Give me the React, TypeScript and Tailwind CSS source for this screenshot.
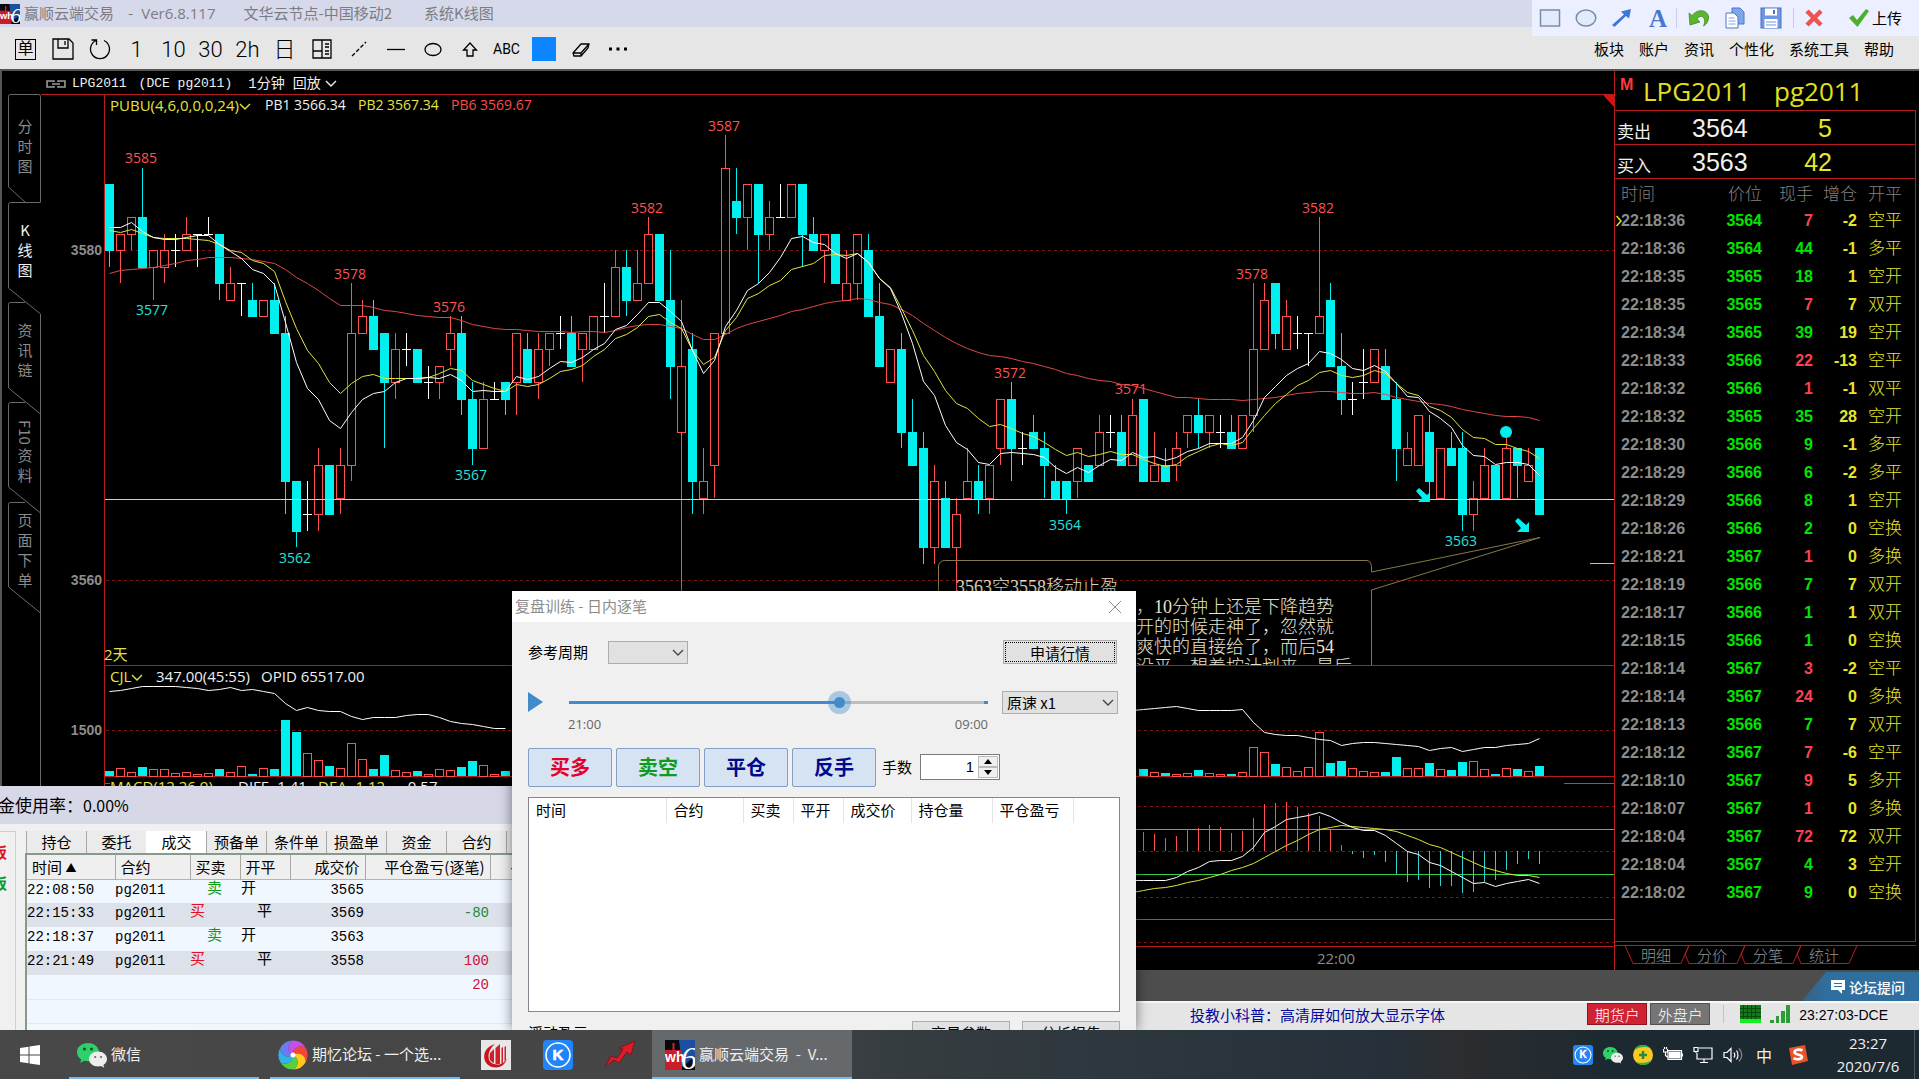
import React, { FC, ReactNode } from 'react';

type Kind = 'c' | 'r' | 'w';
// kind, body top, body bottom, high, low (price above 3500)
type Candle = [Kind, number, number, number, number];

const candles: Candle[] = [
  ['c', 84, 80, 84, 79], ['r', 81, 80, 81, 78], ['r', 82, 81, 82, 80], ['c', 82, 79, 85, 79],
  ['r', 80, 79, 80, 77], ['r', 80, 79, 81, 78], ['w', 80, 80, 81, 79], ['r', 81, 80, 82, 80],
  ['w', 81, 81, 81, 79], ['w', 81, 81, 82, 81], ['c', 81, 78, 81, 77], ['r', 78, 77, 79, 77],
  ['w', 78, 78, 78, 76], ['c', 77, 76, 78, 76], ['r', 77, 76, 77, 76], ['c', 77, 75, 78, 75],
  ['c', 75, 66, 76, 64], ['c', 66, 63, 66, 62], ['w', 64, 64, 66, 63], ['r', 67, 64, 68, 63],
  ['c', 67, 64, 67, 64], ['r', 67, 65, 68, 64], ['r', 75, 67, 78, 66], ['r', 76, 75, 77, 75],
  ['c', 76, 74, 77, 74], ['c', 75, 72, 75, 68], ['r', 74, 72, 75, 71], ['w', 74, 74, 75, 73],
  ['c', 74, 72, 74, 72], ['w', 72, 72, 73, 71], ['r', 73, 72, 73, 71], ['r', 75, 74, 76, 73],
  ['c', 75, 71, 76, 70], ['c', 71, 68, 72, 67], ['r', 71, 68, 72, 68], ['w', 71, 71, 72, 71],
  ['c', 72, 71, 72, 70], ['r', 75, 72, 75, 70], ['c', 74, 72, 75, 72], ['r', 74, 72, 75, 71],
  ['r', 75, 74, 75, 73], ['w', 75, 75, 76, 74], ['c', 75, 73, 76, 73], ['r', 75, 74, 75, 72],
  ['r', 76, 74, 76, 74], ['w', 76, 76, 78, 75], ['r', 79, 76, 80, 76], ['c', 79, 77, 80, 76],
  ['r', 78, 77, 80, 77], ['r', 81, 78, 82, 78], ['c', 81, 77, 81, 77], ['c', 77, 73, 80, 71],
  ['r', 73, 69, 77, 59], ['c', 74, 66, 75, 64], ['r', 66, 65, 68, 64], ['r', 75, 67, 75, 65],
  ['r', 85, 75, 87, 75], ['c', 83, 82, 85, 81], ['r', 84, 82, 84, 80], ['c', 84, 81, 84, 78],
  ['r', 82, 81, 83, 80], ['w', 82, 82, 84, 82], ['r', 84, 82, 84, 82], ['c', 84, 81, 84, 79],
  ['c', 81, 80, 82, 80], ['r', 81, 80, 81, 78], ['c', 81, 78, 81, 78], ['r', 78, 77, 80, 77],
  ['r', 81, 78, 81, 77], ['c', 80, 76, 81, 76], ['c', 76, 73, 78, 73], ['r', 74, 72, 74, 72],
  ['c', 74, 69, 75, 68], ['c', 69, 67, 71, 67], ['c', 68, 62, 69, 61], ['r', 66, 62, 67, 61],
  ['c', 65, 62, 66, 62], ['r', 64, 62, 65, 59], ['r', 66, 65, 68, 65], ['c', 66, 65, 67, 64],
  ['r', 67, 65, 67, 64], ['r', 71, 68, 71, 67], ['c', 71, 68, 72, 66], ['w', 68, 68, 69, 67],
  ['c', 69, 68, 70, 68], ['c', 68, 67, 69, 65], ['c', 66, 65, 67, 65], ['c', 66, 65, 66, 64],
  ['r', 68, 66, 68, 65], ['c', 67, 66, 67, 66], ['r', 69, 67, 70, 67], ['w', 69, 69, 70, 68],
  ['c', 69, 67, 70, 67], ['r', 70, 67, 71, 67], ['c', 71, 66, 71, 66], ['r', 67, 66, 69, 66],
  ['c', 67, 66, 68, 66], ['r', 68, 67, 69, 66], ['r', 70, 69, 70, 68], ['c', 70, 69, 71, 68],
  ['r', 70, 69, 70, 68], ['w', 69, 69, 70, 68], ['c', 69, 68, 70, 68], ['r', 70, 68, 70, 68],
  ['r', 74, 70, 78, 69], ['r', 77, 74, 78, 74], ['c', 78, 75, 78, 74], ['r', 76, 74, 77, 74],
  ['w', 75, 75, 76, 74], ['w', 75, 75, 75, 73], ['r', 76, 75, 82, 75], ['c', 77, 73, 78, 73],
  ['c', 73, 71, 75, 70], ['w', 71, 71, 72, 70], ['w', 72, 72, 74, 71], ['r', 74, 72, 74, 72],
  ['c', 73, 71, 74, 71], ['c', 71, 68, 72, 66], ['r', 68, 67, 69, 67], ['r', 70, 67, 70, 67],
  ['c', 69, 66, 70, 65], ['r', 68, 65, 68, 65], ['c', 68, 67, 69, 67], ['c', 68, 64, 69, 63],
  ['r', 65, 64, 66, 63], ['r', 67, 65, 68, 65], ['c', 67, 65, 67, 65], ['r', 68, 65, 69, 65],
  ['c', 68, 67, 68, 65], ['r', 67, 66, 68, 66], ['c', 68, 64, 68, 64],
];

const pb1 = [
  227, 227, 222, 231, 237, 239, 239, 237, 235, 235, 244, 251, 258, 269, 273, 284, 322, 362, 388, 399, 420, 428, 412,
  399, 393, 391, 382, 378, 378, 377, 378, 374, 380, 391, 390, 391, 391, 376, 379, 376, 368, 361, 362, 357, 349, 343,
  329, 325, 314, 302, 302, 311, 321, 350, 373, 360, 326, 310, 290, 283, 272, 257, 238, 236, 242, 244, 253, 258, 253,
  262, 278, 288, 313, 343, 381, 395, 425, 442, 449, 462, 464, 453, 452, 453, 454, 457, 467, 473, 467, 472, 465, 459,
  460, 452, 457, 456, 460, 457, 451, 448, 443, 443, 443, 437, 420, 397, 386, 375, 368, 363, 351, 353, 359, 368, 370,
  365, 371, 383, 396, 397, 411, 418, 427, 445, 455, 456, 464, 462, 462, 464, 475,
];
const pb2 = [
  230, 232, 229, 233, 237, 238, 238, 238, 239, 240, 244, 250, 252, 260, 263, 271, 301, 328, 350, 363, 382, 393, 383,
  376, 374, 378, 378, 378, 378, 377, 373, 368, 370, 380, 384, 388, 391, 384, 386, 384, 378, 371, 369, 365, 356, 349,
  338, 334, 327, 316, 314, 322, 328, 350, 364, 357, 330, 317, 298, 293, 285, 280, 269, 266, 263, 255, 254, 255, 253,
  262, 278, 287, 308, 330, 355, 371, 390, 403, 408, 418, 426, 424, 428, 433, 436, 442, 449, 455, 452, 456, 454, 451,
  454, 454, 459, 463, 466, 464, 456, 451, 446, 443, 445, 442, 428, 415, 403, 394, 385, 380, 372, 370, 375, 377, 375,
  370, 373, 383, 392, 395, 406, 410, 417, 429, 437, 438, 444, 444, 448, 451, 458,
];
const pb6 = [
  273, 270, 269, 268, 267, 265, 263, 260, 259, 257, 257, 257, 258, 259, 261, 263, 269, 277, 283, 290, 298, 305, 305,
  305, 307, 310, 311, 313, 315, 316, 317, 317, 320, 324, 326, 328, 329, 329, 330, 331, 331, 331, 332, 331, 331, 332,
  330, 327, 325, 324, 324, 326, 328, 334, 339, 339, 334, 328, 324, 321, 318, 315, 311, 309, 306, 303, 301, 300, 298,
  299, 302, 304, 309, 315, 323, 330, 337, 343, 348, 352, 355, 356, 358, 361, 363, 366, 369, 373, 375, 378, 380, 381,
  384, 385, 388, 391, 394, 397, 397, 398, 399, 399, 399, 400, 399, 398, 397, 395, 393, 392, 391, 391, 392, 393, 393,
  392, 394, 397, 399, 401, 403, 404, 406, 409, 411, 413, 415, 416, 416, 417, 420,
];

const volumeEarly = [
  5, 8, 4, 9, 7, 7, 3, 4, 2, 3, 7, 4, 10, 2, 8, 7, 56, 44, 23, 16, 10, 8, 33, 17, 7, 21, 6, 4, 5, 2, 7, 6, 9, 15, 11,
  2, 5,
];
const volumeLate = [
  7, 4, 3, 2, 3, 6, 3, 2, 2, 4, 29, 24, 12, 9, 5, 9, 44, 13, 15, 8, 5, 4, 4, 19, 8, 8, 13, 7, 6, 14, 15, 7, 2, 8, 7,
  5, 10,
];
const opidEarly = [
  691, 690, 688, 686, 686, 686, 686, 687, 688, 690, 689, 687, 690, 689, 691, 693, 703, 710, 707, 710, 711, 711, 716,
  719, 717, 717, 717, 715, 714, 714, 717, 721, 723, 724, 726, 728, 728,
];
const opidLate = [
  710, 709, 708, 707, 706, 708, 710, 710, 710, 710, 709, 722, 732, 734, 735, 735, 737, 739, 740, 745, 743, 742, 742,
  743, 744, 745, 746, 750, 748, 747, 751, 749, 747, 747, 745, 744, 743, 738,
];
const diff = [
  880, 880, 880, 880, 877, 871, 867, 861, 860, 860, 856, 847, 832, 826, 819, 817, 815, 812, 816, 822, 827, 830, 830,
  835, 843, 851, 854, 862, 865, 871, 877, 883, 882, 886, 883, 881, 879, 883,
];
const dea = [
  892, 890, 888, 887, 885, 882, 880, 877, 874, 870, 867, 863, 857, 851, 845, 840, 834, 829, 827, 825, 826, 827, 828,
  829, 831, 835, 839, 844, 847, 852, 857, 862, 867, 870, 873, 875, 875, 877,
];
const macd = [
  19, 17, 13, 15, 22, 23, 26, 24, 18, 20, 33, 47, 48, 49, 44, 38, 35, 21, 6, -3, -7, -4, -11, -23, -31, -29, -37, -35,
  -35, -42, -41, -31, -29, -19, -13, -8, -13,
];

const LATE = 94;
const RED = '#ff5050';
const CYAN = '#00f0f0';
const LINE = '#b91c1c';

const px = (i: number) => 109 + i * 11;
const py = (price: number) => Math.round(250 + (80 - price) * 16.5);
const toPoints = (ys: number[], from = 0) => ys.map((y, i) => `${px(from + i) + 0.5},${y + 0.5}`).join(' ');

const CandleShape: FC<{ index: number; candle: Candle }> = ({ index, candle }) => {
  const [kind, top, bottom, high, low] = candle;
  const x = px(index);
  const color = kind === 'c' ? CYAN : kind === 'r' ? RED : '#ffffff';
  const t = py(top);
  const b = py(bottom);
  return (
    <g shapeRendering="crispEdges">
      {high > top && <rect x={x} y={py(high)} width={1} height={t - py(high)} fill={color} />}
      {low < bottom && <rect x={x} y={b} width={1} height={py(low) - b} fill={color} />}
      {kind === 'c' && <rect x={x - 4} y={t} width={9} height={b - t + 1} fill={color} />}
      {kind === 'r' && <rect x={x - 3.5} y={t + 0.5} width={8} height={b - t} fill="none" stroke={color} />}
      {kind === 'w' && <rect x={x - 4} y={t} width={9} height={1} fill={color} />}
    </g>
  );
};

const VolumeBar: FC<{ index: number; height: number }> = ({ index, height }) => {
  const x = px(index);
  return candles[index][0] === 'c' ? (
    <rect x={x - 4} y={776 - height} width={9} height={height} fill={CYAN} shapeRendering="crispEdges" />
  ) : (
    <rect x={x - 3.5} y={776.5 - height} width={8} height={height} fill="none" stroke={RED} shapeRendering="crispEdges" />
  );
};

const priceTags: [number, number, string, string][] = [
  [141, 163, '3585', RED],
  [152, 315, '3577', '#22e0dc'],
  [350, 279, '3578', RED],
  [449, 312, '3576', RED],
  [295, 563, '3562', '#22e0dc'],
  [471, 480, '3567', '#22e0dc'],
  [647, 213, '3582', RED],
  [724, 131, '3587', RED],
  [1010, 378, '3572', RED],
  [1131, 394, '3571', RED],
  [1065, 530, '3564', '#22e0dc'],
  [1252, 279, '3578', RED],
  [1318, 213, '3582', RED],
  [1461, 546, '3563', '#22e0dc'],
];

const noteLines = ['，10分钟上还是下降趋势', '开的时候走神了，忽然就', '爽快的直接给了，而后54', '没平，想着按计划来，最后'];

const Chart: FC = () => (
  <svg
    className="block h-full w-full font-['Open_Sans','Noto_Sans_CJK_SC',sans-serif]"
    viewBox="41 94 1573 876"
    preserveAspectRatio="xMinYMin meet"
    role="img"
    aria-label="LPG2011 K线图"
  >
    <defs>
      <clipPath id="main-pane">
        <rect x="105" y="94" width="1509" height="571" />
      </clipPath>
    </defs>
    {/* grid */}
    <g stroke="#7a1414" strokeDasharray="3 3" shapeRendering="crispEdges">
      {[250, 580, 730, 806, 851, 897, 942].map((y) => (
        <line key={y} x1={106} x2={1614} y1={y + 0.5} y2={y + 0.5} />
      ))}
    </g>
    <g stroke={LINE} shapeRendering="crispEdges">
      <line x1={41} x2={1614} y1={94.5} y2={94.5} />
      <line x1={104} x2={1614} y1={665.5} y2={665.5} />
      <line x1={104} x2={1614} y1={776.5} y2={776.5} />
      <line x1={104} x2={1614} y1={946.5} y2={946.5} />
      <line x1={104.5} x2={104.5} y1={94} y2={946} />
    </g>
    <path d="M1603 95h11v12z" fill="#d01414" />

    {candles.map((c, i) => (
      <CandleShape key={i} index={i} candle={c} />
    ))}
    <g fill="none" strokeWidth={1}>
      <polyline points={toPoints(pb6)} stroke="#e04848" />
      <polyline points={toPoints(pb2)} stroke="#e4e43c" />
      <polyline points={toPoints(pb1)} stroke="#ffffff" />
    </g>
    <rect x={105} y={499} width={1509} height={1} fill="#e0e040" />
    <rect x={1590} y={563} width={24} height={1} fill="#c8d830" />

    <g fill={CYAN}>
      <circle cx={1506} cy={432} r={6} />
      <path d="M1416 491l3-3 8 7 3-3v10h-12l4-4z" />
      <path d="M1515 521l3-3 8 7 3-3v10h-12l4-4z" />
    </g>

    <g clipPath="url(#main-pane)">
      <path
        d="M938.500 666V566a6 6 0 0 1 6-5.500H1366a5 6 0 0 1 5.500 6V572L1540 537.500L1371.500 590V666"
        fill="none"
        stroke="#85794a"
      />
      <g fill="#e8e4d0" fontSize={18} className="font-['Liberation_Serif','Noto_Sans_CJK_SC',serif] font-light">
        <text x={956} y={593}>
          3563空3558移动止盈
        </text>
        {noteLines.map((line, i) => (
          <text key={line} x={1136} y={613 + i * 20}>
            {line}
          </text>
        ))}
      </g>
    </g>

    <g fontSize={14} textAnchor="middle">
      {priceTags.map(([x, y, label, color]) => (
        <text key={`${x}-${y}`} x={x} y={y} fill={color}>
          {label}
        </text>
      ))}
    </g>
    <g fontSize={14} fill="#8c8c8c" textAnchor="end" className="font-['Liberation_Sans',sans-serif] font-bold">
      <text x={102} y={255}>3580</text>
      <text x={102} y={585}>3560</text>
      <text x={102} y={735}>1500</text>
    </g>
    <text x={104} y={660} fontSize={15} fill="#e4e43c">2天</text>
    <text x={1336} y={964} fontSize={15} fill="#8c8c8c" textAnchor="middle">22:00</text>

    {/* volume */}
    {volumeEarly.map((h, i) => (
      <VolumeBar key={i} index={i} height={h} />
    ))}
    {volumeLate.map((h, i) => (
      <VolumeBar key={i} index={LATE + i} height={h} />
    ))}
    <polyline points={toPoints(opidEarly)} fill="none" stroke="#ffffff" />
    <polyline points={toPoints(opidLate, LATE - 1)} fill="none" stroke="#ffffff" />

    {/* macd */}
    <g shapeRendering="crispEdges">
      <rect x={105} y={829} width={1509} height={1} fill="#30d048" />
      <rect x={105} y={874} width={1509} height={1} fill="#30d048" />
      <rect x={105} y={919} width={1509} height={1} fill="#2f6fd0" />
      <rect x={1564} y={783} width={50} height={1} fill="#2f6fd0" />
      <rect x={105} y={783} width={5} height={1} fill="#2f6fd0" />
      {macd.map((v, i) => (
        <rect
          key={i}
          x={px(LATE + i)}
          y={v > 0 ? 851 - v : 851}
          width={1}
          height={Math.abs(v)}
          fill={v > 0 ? RED : '#30d0d0'}
        />
      ))}
    </g>
    <polyline points={toPoints(dea, LATE - 1)} fill="none" stroke="#e4e43c" />
    <polyline points={toPoints(diff, LATE - 1)} fill="none" stroke="#ffffff" />
  </svg>
);

const Chevron: FC<{ className?: string }> = ({ className }) => (
  <svg viewBox="0 0 12 8" className={`h-2 w-3 ${className ?? ''}`} fill="none" stroke="currentColor" strokeWidth={1.4}>
    <path d="M1 1l5 5 5-5" />
  </svg>
);

const WhLogo: FC<{ className: string }> = ({ className }) => (
  <svg viewBox="0 0 30 30" className={className}>
    <rect width="30" height="30" fill="#08080e" />
    <path d="M14 0h16v16L17 27z" fill="#1c4fa0" />
    <path d="M0 10h17v20H0z" fill="#c81e2a" />
    <path d="M7.500 3h2v8h-2z" fill="#d21f2b" />
    <text x="0" y="22" fontSize="14" fill="#fff" className="font-['Liberation_Sans',sans-serif] font-bold">
      wh
    </text>
    <text x="16" y="29" fontSize="32" fill="#fff" className="font-['Liberation_Serif',serif] italic">
      6
    </text>
  </svg>
);

const WeChat: FC<{ className: string }> = ({ className }) => (
  <svg viewBox="0 0 30 26" className={className}>
    <path d="M11 1C4.800 1 0 5 0 10.200c0 3 1.600 5.500 4.200 7.200L3.200 21l4-2.200c1.200.3 2.500.5 3.800.5 6.100 0 11-4.100 11-9.100S17.100 1 11 1z" fill="#2fcf6b" />
    <circle cx="7.500" cy="7" r="1.500" fill="#12532b" />
    <circle cx="14.500" cy="7" r="1.500" fill="#12532b" />
    <path d="M21 9.500c-5 0-9 3.400-9 7.500s4 7.500 9 7.500c1 0 2-.2 3-.4l3.200 1.700-.8-2.800C28.600 21.600 30 19.500 30 17c0-4.100-4-7.500-9-7.500z" fill="#ededed" />
    <circle cx="18.200" cy="15" r="1.100" fill="#666" />
    <circle cx="24" cy="15" r="1.100" fill="#666" />
  </svg>
);

const KIcon: FC<{ className: string }> = ({ className }) => (
  <svg viewBox="0 0 30 30" className={className}>
    <rect width="30" height="30" rx="4" fill="#2184f7" />
    <circle cx="15" cy="15" r="12" fill="none" stroke="#fff" strokeWidth="1.600" />
    <text x="15" y="20" fontSize="15" textAnchor="middle" fill="#fff" stroke="#fff" strokeWidth=".6" className="font-['Liberation_Sans',sans-serif] font-bold">
      K
    </text>
  </svg>
);

const Svg: FC<{ children: ReactNode; className?: string }> = ({ children, className }) => (
  <svg
    viewBox="0 0 24 24"
    className={`h-6 w-6 ${className ?? ''}`}
    fill="none"
    stroke="currentColor"
    strokeWidth={1.3}
  >
    {children}
  </svg>
);

const tools: [string, ReactNode][] = [
  ['下单', <span className="flex h-[21px] w-[21px] items-center justify-center border border-black text-[16px] font-normal leading-none">单</span>],
  ['保存', <Svg><path d="M2 2h16l4 4v16H2zM7 2v9h10V2M14 4v4" /></Svg>],
  ['刷新', <Svg><path d="M16 3.500a9.500 9.500 0 1 1-8 0M3.500 3h5v5" /></Svg>],
  ['1分钟', '1'],
  ['10分钟', '10'],
  ['30分钟', '30'],
  ['2小时', '2h'],
  ['日线', '日'],
  ['布局', <Svg><path d="M3 3h18v18H3zM12 3v18M3 14h9M15 7h4M15 10h4M15 14h4M15 17h4" /></Svg>],
  ['斜线', <Svg><path d="M5 19L19 5" strokeDasharray="4 2" /></Svg>],
  ['横线', <Svg><path d="M3 12.500h18" /></Svg>],
  ['椭圆', <Svg><ellipse cx="12" cy="12.500" rx="8" ry="6" /></Svg>],
  ['箭头', <Svg><path d="M12 6l6.500 7H15v6H9v-6H5.500z" /></Svg>],
  ['文字', <span className="text-[14px] font-normal">ABC</span>],
  ['颜色', <span className="h-6 w-6 bg-[#0a84ff]" />],
  ['橡皮', <Svg><path d="M4 16L12 7h8l-1 4-7 8H5zM4 16h8l8-9M12 16v3" /></Svg>],
  ['更多', <svg viewBox="0 0 20 6" className="h-1.5 w-5"><path d="M1 1.500h3v3H1zM8.500 1.500h3v3h-3zM16 1.500h3v3h-3z" /></svg>],
];

const menus = ['板块', '账户', '资讯', '个性化', '系统工具', '帮助'];

const sideTabs: { glyphs: string[]; className: string }[] = [
  { glyphs: ['分', '时', '图'], className: 'h-[108px] pt-[22px] text-[#8a8a8a]' },
  { glyphs: ['K', '线', '图'], className: 'h-[100px] pt-[18px] text-[#f0f0f0]' },
  { glyphs: ['资', '讯', '链'], className: 'h-[100px] pt-[18px] text-[#8a8a8a]' },
  { glyphs: ['F10', '资', '料'], className: 'h-[100px] pt-[18px] text-[#8a8a8a]' },
  { glyphs: ['页', '面', '下', '单'], className: 'h-[112px] pt-2 text-[#8a8a8a]' },
];

const ticks: [string, number, number, boolean, number, string][] = [
  ['22:18:36', 3564, 7, true, -2, '空平'],
  ['22:18:36', 3564, 44, false, -1, '多平'],
  ['22:18:35', 3565, 18, false, 1, '空开'],
  ['22:18:35', 3565, 7, true, 7, '双开'],
  ['22:18:34', 3565, 39, false, 19, '空开'],
  ['22:18:33', 3566, 22, true, -13, '空平'],
  ['22:18:32', 3566, 1, true, -1, '双平'],
  ['22:18:32', 3565, 35, false, 28, '空开'],
  ['22:18:30', 3566, 9, false, -1, '多平'],
  ['22:18:29', 3566, 6, false, -2, '多平'],
  ['22:18:29', 3566, 8, false, 1, '空开'],
  ['22:18:26', 3566, 2, false, 0, '空换'],
  ['22:18:21', 3567, 1, true, 0, '多换'],
  ['22:18:19', 3566, 7, false, 7, '双开'],
  ['22:18:17', 3566, 1, false, 1, '双开'],
  ['22:18:15', 3566, 1, false, 0, '空换'],
  ['22:18:14', 3567, 3, true, -2, '空平'],
  ['22:18:14', 3567, 24, true, 0, '多换'],
  ['22:18:13', 3566, 7, false, 7, '双开'],
  ['22:18:12', 3567, 7, true, -6, '空平'],
  ['22:18:10', 3567, 9, true, 5, '多开'],
  ['22:18:07', 3567, 1, true, 0, '多换'],
  ['22:18:04', 3567, 72, true, 72, '双开'],
  ['22:18:04', 3567, 4, false, 3, '空开'],
  ['22:18:02', 3567, 9, false, 0, '空换'],
];

const TitleBar: FC = () => (
  <header className="flex h-[27px] shrink-0 items-center bg-[#d6d9e9] text-[15px] text-[#7c7c84]">
    <WhLogo className="h-5 w-5" />
    <span className="ml-1">赢顺云端交易</span>
    <span className="ml-3.5">-</span>
    <span className="ml-2 font-['Open_Sans',sans-serif]">Ver6.8.117</span>
    <span className="ml-7">文华云节点-中国移动2</span>
    <span className="ml-8">系统K线图</span>
  </header>
);

const Toolbar: FC = () => (
  <div className="flex h-[42px] shrink-0 items-center justify-between bg-[#e6e6e6] pl-[7px] pr-6 pt-0.5 text-black">
    <div className="flex">
      {tools.map(([label, icon]) => (
        <button
          key={label}
          aria-label={label}
          className="flex h-9 w-[37px] items-center justify-center font-['Roboto','Noto_Sans_CJK_SC',sans-serif] text-[22px] font-light"
        >
          {icon}
        </button>
      ))}
    </div>
    <nav className="flex gap-[15px] pr-px text-[15px]">
      {menus.map((m) => (
        <a key={m} href="#">
          {m}
        </a>
      ))}
    </nav>
  </div>
);

const ShotBar: FC = () => (
  <div className="absolute right-0 top-0 z-10 flex h-9 w-[387px] items-center bg-[#ebefff]">
    <button aria-label="矩形" className="flex w-9 justify-center">
      <svg viewBox="0 0 22 22" className="h-[22px] w-[22px]"><rect x="1.500" y="3" width="19" height="16" fill="#e1ebfa" stroke="#7b8bb0" strokeWidth="1.500" /></svg>
    </button>
    <button aria-label="圆形" className="flex w-9 justify-center">
      <svg viewBox="0 0 22 22" className="h-[22px] w-[22px]"><ellipse cx="11" cy="11" rx="9.800" ry="8" fill="#e1ebfa" stroke="#7b8bb0" strokeWidth="1.500" /></svg>
    </button>
    <button aria-label="画箭头" className="flex w-9 justify-center">
      <svg viewBox="0 0 22 22" className="h-[22px] w-[22px]"><path d="M1 18L13 7.500 10 4.500l10-2.500-2 9.500-3-2.500L3.500 20z" fill="#3f74d8" /></svg>
    </button>
    <button aria-label="添加文字" className="w-9 font-['Liberation_Serif',serif] text-[25px] font-bold leading-none text-[#4a76cc]">A</button>
    <i className="h-5 w-px bg-[#c8cfe4]" />
    <button aria-label="撤销" className="ml-1 flex w-9 justify-center">
      <svg viewBox="0 0 22 22" className="h-[22px] w-[22px]"><path d="M1 6l3 2.500C10 1 20 3 20.500 10c.2 4-2 7.500-5 9 2-4 1.500-9-2-9.500-2-.3-3.500.8-4.500 2.500l3 3L2 18z" fill="#5cb531" stroke="#3c8c1c" strokeWidth=".8" /></svg>
    </button>
    <button aria-label="复制" className="flex w-9 justify-center">
      <svg viewBox="0 0 22 22" className="h-[22px] w-[22px]"><path d="M8 1h8l4 4v12H8z" fill="#7ea6ea" stroke="#4d78c8" /><path d="M2 6h8l4 4v11H2z" fill="#fff" stroke="#4d78c8" /><path d="M4.500 11h6M4.500 14h7M4.500 17h7" stroke="#7ea6ea" /></svg>
    </button>
    <button aria-label="存盘" className="flex w-9 justify-center">
      <svg viewBox="0 0 22 22" className="h-[22px] w-[22px]"><rect x="1" y="1" width="20" height="20" fill="#6f97e4" stroke="#4a70bc" /><path d="M5 1.500h12v7H5zM4.500 12h13v9h-13z" fill="#fff" /><path d="M6 15h10M6 18h10" stroke="#6f97e4" /><path d="M13 3h2v4h-2z" fill="#4a70bc" /></svg>
    </button>
    <i className="ml-1 h-5 w-px bg-[#c8cfe4]" />
    <button aria-label="关闭" className="flex w-10 justify-center">
      <svg viewBox="0 0 22 22" className="h-[22px] w-[22px]"><path d="M4 4l14 14M18 4L4 18" stroke="#ef5350" strokeWidth="4.500" /></svg>
    </button>
    <button className="ml-3.5 flex items-center gap-0.5 text-[15px] text-black">
      <svg viewBox="0 0 22 22" className="h-[22px] w-[22px]"><path d="M1 11l4-3 4 5L18 2l3 2L9.500 20z" fill="#4caf2a" /></svg>
      上传
    </button>
  </div>
);

const SideTabs: FC = () => (
  <aside className="relative flex w-[41px] shrink-0 flex-col border-l-2 border-[#555] pl-[7px] pt-[23px]">
    <svg viewBox="0 0 39 899" className="absolute left-0 top-0 h-[899px] w-[39px]" fill="none" stroke="#6a6a6a">
      <path d="M38.500 131V25.500a2 2 0 0 0-2-2H8.500a2 2 0 0 0-2 2V116L23 131" />
      <path d="M38.500 131.500H8.500a2 2 0 0 0-2 2V217L38.500 243V899" />
      <path d="M23 231.500H8.500a2 2 0 0 0-2 2V317L38.500 343" />
      <path d="M23 331.500H8.500a2 2 0 0 0-2 2V416L38.500 442" />
      <path d="M23 431.500H8.500a2 2 0 0 0-2 2V516L38.500 542" />
    </svg>
    {sideTabs.map((tab) => (
      <button key={tab.glyphs.join('')} className={`relative flex flex-col items-center text-[15px] leading-5 ${tab.className}`}>
        {tab.glyphs.map((g) =>
          g.length > 1 ? (
            <span key={g} className="text-[15px] [writing-mode:vertical-rl]">{g}</span>
          ) : (
            <span key={g}>{g}</span>
          ),
        )}
      </button>
    ))}
  </aside>
);

const ChartPane: FC = () => (
  <section className="flex min-w-0 flex-1 flex-col">
    <div className="flex h-[23px] items-center pl-[5px] pt-[3px] font-['Liberation_Mono','Noto_Sans_CJK_SC',monospace] text-[13px] text-[#f0f0f0]">
      <svg viewBox="0 0 20 8" className="mr-1.5 h-2 w-5" fill="none" stroke="#9a9a9a" strokeWidth={1.6}>
        <path d="M8 2V1H1v6h7V6M12 2V1h7v6h-7V6M6 4h8" />
      </svg>
      <span className="mr-3">LPG2011</span>
      <span className="mr-4">(DCE pg2011)</span>
      <button className="mr-2 text-[14px]">1分钟</button>
      <button className="flex items-center gap-1 text-[14px]">
        回放
        <Chevron />
      </button>
    </div>
    <div className="relative min-h-0 flex-1">
      <Chart />
      <div className="absolute left-[69px] top-px flex font-['Open_Sans',sans-serif] text-[14px] leading-5 text-[#f0f0f0]">
        <button className="flex w-[155px] items-center text-[15px] text-[#e4e43c]">
          PUBU(4,6,0,0,0,24)
          <Chevron className="mt-1" />
        </button>
        <span className="w-[93px]">PB1 3566.34</span>
        <span className="w-[93px] text-[#e4e43c]">PB2 3567.34</span>
        <span className="text-[#ff4848]">PB6 3569.67</span>
      </div>
      <div className="absolute left-[69px] top-[572px] flex font-['Open_Sans',sans-serif] text-[15px] leading-5 text-[#f0f0f0]">
        <button className="flex w-[46px] items-center text-[#e4e43c]">
          CJL
          <Chevron className="mt-1" />
        </button>
        <span className="w-[105px]">347.00(45:55)</span>
        <span>OPID 65517.00</span>
      </div>
      <div className="absolute left-[69px] top-[682px] flex font-['Open_Sans',sans-serif] text-[15px] leading-5 text-[#f0f0f0]">
        <span className="w-[128px] text-[#e4e43c]">MACD(12,26,9)</span>
        <span className="w-20">DIFF -1.41</span>
        <span className="w-[85px] text-[#e4e43c]">DEA -1.12</span>
        <span>-0.57</span>
      </div>
    </div>
  </section>
);

const Quote: FC<{ label: string; price: number; lots: number }> = ({ label, price, lots }) => (
  <div className="flex h-[34px] items-center border-t border-[#b91c1c] pl-0.5 pt-0.5 text-[17px] text-[#f0f0f0]">
    <span className="w-[75px] pt-1">{label}</span>
    <span className="w-14 font-['Liberation_Sans',sans-serif] text-[25px]">{price}</span>
    <span className="w-[84px] text-right font-['Liberation_Sans',sans-serif] text-[25px] text-[#e6e62a]">{lots}</span>
  </div>
);

const QuotePanel: FC = () => (
  <aside className="flex w-[305px] shrink-0 flex-col border-l border-[#b91c1c]">
    <div className="flex h-[39px] font-['Open_Sans',sans-serif] text-[26px] leading-[41px] text-[#e0e01e]">
      <span className="w-7 pl-[5px] font-['Liberation_Sans',sans-serif] text-[16px] font-bold leading-7 text-[#ff3838]">M</span>
      <span className="w-[131px]">LPG2011</span>
      <span>pg2011</span>
    </div>
    <div className="mr-[3px] h-[832px] border-b border-r border-[#b91c1c]">
      <Quote label="卖出" price={3564} lots={5} />
      <Quote label="买入" price={3563} lots={42} />
      <table className="w-full table-fixed border-t border-[#b91c1c] text-right text-[16px] font-bold">
        <thead className="text-[17px] text-[#808080]">
          <tr className="h-7">
            <th className="w-[80px] pl-1.5 text-left font-light">时间</th>
            <th className="w-[67px] font-light">价位</th>
            <th className="w-[51px] font-light">现手</th>
            <th className="w-[44px] font-light">增仓</th>
            <th className="pr-[13px] font-light">开平</th>
          </tr>
        </thead>
        <tbody className="font-['Liberation_Sans','Noto_Sans_CJK_SC',sans-serif]">
          {ticks.map(([time, price, lots, up, delta, note], i) => (
            <tr key={i} className="h-7">
              <td className="relative pl-1.5 text-left text-[#8c8c8c]">
                {i === 0 && (
                  <svg viewBox="0 0 6 12" className="absolute left-px top-2 h-3 w-1.5" fill="none" stroke="#e6e62a" strokeWidth="1.500">
                    <path d="M.5 1l4.500 5-4.500 5" />
                  </svg>
                )}
                {time}
              </td>
              <td className="text-[#00e600]">{price}</td>
              <td className={up ? 'text-[#ff4050]' : 'text-[#00e600]'}>{lots}</td>
              <td className="text-[#e6e62a]">{delta}</td>
              <td className="pr-[13px] text-[17px] font-light text-[#e6e62a]">{note}</td>
            </tr>
          ))}
        </tbody>
      </table>
    </div>
    <div className="relative h-7">
      <svg viewBox="0 0 304 24" className="absolute left-0 top-[3px] h-6 w-[304px]" fill="none" stroke="#b91c1c">
        <path d="M0 .5H10L18 18.500H66L74 .5M70 9L74 18.500H122L130 .5M126 9L130 18.500H178L186 .5M182 9L186 18.500H234L242 .5M74 .5L70 9M130 .5L126 9M186 .5L182 9M10 .5H301" />
      </svg>
      <nav className="relative flex pl-[13px] text-[15px] font-light leading-[25px] text-[#949494]">
        {['明细', '分价', '分笔', '统计'].map((t) => (
          <button key={t} className="w-14">
            {t}
          </button>
        ))}
      </nav>
    </div>
  </aside>
);

const trades: [string, boolean, boolean, string, string, string][] = [
  ['22:08:50', false, true, '3565', '', ''],
  ['22:15:33', true, false, '3569', '-80', 'text-[#1a8a3a]'],
  ['22:18:37', false, true, '3563', '', ''],
  ['22:21:49', true, false, '3558', '100', 'text-[#c8103c]'],
];

const TradeWindow: FC = () => (
  <section className="absolute bottom-0 left-0 top-[715px] flex w-[512px] flex-col overflow-hidden bg-[#f0f0f0] text-[15px] text-black">
    <div className="flex h-[38px] shrink-0 items-center bg-[#d6d8e8] text-[17px]">
      <span className="flex w-[83px] justify-end overflow-hidden whitespace-nowrap">资金使用率：</span>
      <span className="text-[16px]">0.00%</span>
    </div>
    <div className="flex min-h-0 flex-1 pt-[7px]">
      <div className="flex w-4 flex-col items-end overflow-hidden border-r border-t border-[#d0d0d0] pr-2 pt-1 font-bold leading-[31px]">
        <span className="text-[#e01020]">板</span>
        <span className="text-[#0a9a2a]">板</span>
      </div>
      <div className="ml-[9px] flex min-w-0 flex-1 flex-col overflow-hidden">
        <div className="flex h-[22px] shrink-0 pl-px">
          {['持仓', '委托', '成交', '预备单', '条件单', '损盈单', '资金', '合约', ''].map((t) => (
            <button
              key={t}
              className={`w-[60px] shrink-0 border-l ${t === '成交' ? 'border-white bg-white' : 'border-[#a8a8a8] bg-[#ebebeb]'}`}
            >
              {t}
            </button>
          ))}
        </div>
        <div className="flex-1 border-l-2 border-t-2 border-[#8a9a8a] bg-[#f0f7ff]">
          <table className="w-[620px] table-fixed text-left">
            <thead className="bg-[#efefef] text-[15px]">
              <tr className="h-6 border-b border-[#b4b4b4]">
                <th className="w-[88px] border-r border-[#a8a8a8] pl-[5px] font-normal leading-5">时间 <span className="align-top text-[11px]">▲</span></th>
                <th className="w-[75px] border-r border-[#a8a8a8] pl-[5px] font-normal leading-5">合约</th>
                <th className="w-[50px] border-r border-[#a8a8a8] pl-[5px] font-normal leading-5">买卖</th>
                <th className="w-[50px] border-r border-[#a8a8a8] pl-[5px] font-normal leading-5">开平</th>
                <th className="w-[75px] border-r border-[#a8a8a8] pr-[5px] text-right font-normal leading-5">成交价</th>
                <th className="w-[125px] border-r border-[#a8a8a8] pr-[5px] text-right font-normal leading-5">平仓盈亏(逐笔)</th>
                <th className="pl-5 font-normal leading-5">平仓盈亏(盯市)</th>
              </tr>
            </thead>
            <tbody className="font-['Liberation_Mono','Noto_Sans_CJK_SC',monospace] text-[14px] leading-5">
              {trades.map(([time, buy, open, price, profit, tone]) => (
                <tr key={time} className="h-6 align-top even:bg-[#dde1ea]">
                  <td>{time}</td>
                  <td>pg2011</td>
                  <td className={`text-[15px] leading-5 ${buy ? 'text-[#e01020]' : 'pl-[17px] text-[#129a1a]'}`}>{buy ? '买' : '卖'}</td>
                  <td className={`text-[15px] leading-5 ${open ? 'pl-px' : 'pl-[17px]'}`}>{open ? '开' : '平'}</td>
                  <td className="pr-px text-right">{price}</td>
                  <td className={`pr-px text-right ${tone}`}>{profit}</td>
                  <td />
                </tr>
              ))}
              <tr className="h-6 border-b border-[#e2e9f2] align-top">
                <td colSpan={5} />
                <td className="pr-px text-right text-[#c8103c]">20</td>
                <td />
              </tr>
              <tr className="h-6 border-b border-[#e2e9f2]">
                <td colSpan={7} />
              </tr>
            </tbody>
          </table>
        </div>
      </div>
    </div>
  </section>
);

const orderButtons = [
  { label: '买多', className: 'text-[#e4002b]' },
  { label: '卖空', className: 'text-[#109a20]' },
  { label: '平仓', className: 'text-[#000a8c]' },
  { label: '反手', className: 'text-[#000a8c]' },
];

const ReplayDialog: FC = () => (
  <section
    role="dialog"
    aria-label="复盘训练 - 日内逐笔"
    className="absolute bottom-0 left-[512px] top-[520px] flex w-[624px] flex-col overflow-hidden bg-[#f0f0f0] text-[15px] text-black shadow-[0_0_12px_rgba(0,0,0,0.5)]"
  >
    <div className="flex h-[31px] shrink-0 items-center justify-between bg-white pl-[3px] pr-3.5 text-[#8c8c8c]">
      复盘训练 - 日内逐笔
      <button aria-label="关闭窗口">
        <svg viewBox="0 0 14 14" className="h-3.5 w-3.5" fill="none" stroke="#888">
          <path d="M1 1l12 12M13 1L1 13" />
        </svg>
      </button>
    </div>
    <div className="flex flex-col px-4">
      <div className="mt-[18px] flex h-6 items-center">
        <label htmlFor="period">参考周期</label>
        <span className="relative ml-5 h-[23px] w-20">
          <select id="period" className="h-full w-full appearance-none border border-[#adadad] bg-[#e1e1e1]" />
          <Chevron className="pointer-events-none absolute right-1 top-2 text-[#444]" />
        </span>
        <button className="ml-auto mr-[3px] h-6 w-[114px] border border-[#adadad] bg-[#e1e1e1] p-px leading-none">
          <span className="flex h-full items-center justify-center border border-dotted border-black">申请行情</span>
        </button>
      </div>
      <div className="mt-[26px] flex h-6 items-center">
        <button aria-label="播放">
          <svg viewBox="0 0 15 20" className="h-5 w-[15px]">
            <path d="M0 0l15 10L0 20z" fill="#428bca" />
          </svg>
        </button>
        <input
          type="range"
          aria-label="回放进度"
          defaultValue={65}
          className="ml-[26px] h-[3px] w-[419px] appearance-none bg-[linear-gradient(to_right,#428bca_65%,#bdbdbd_65%,#bdbdbd_99%,#428bca_99%)] [&::-webkit-slider-thumb]:h-[11px] [&::-webkit-slider-thumb]:w-[11px] [&::-webkit-slider-thumb]:appearance-none [&::-webkit-slider-thumb]:rounded-full [&::-webkit-slider-thumb]:bg-[#428bca] [&::-webkit-slider-thumb]:shadow-[0_0_0_6px_rgba(66,139,202,0.4)]"
        />
        <span className="relative ml-auto mr-0.5 h-[23px] w-[116px]">
          <select aria-label="回放速度" className="h-full w-full appearance-none border border-[#adadad] bg-[#e1e1e1] pl-1 text-[15px] leading-none">
            <option>原速 x1</option>
          </select>
          <Chevron className="pointer-events-none absolute right-1 top-2 text-[#444]" />
        </span>
      </div>
      <div className="ml-10 mt-px flex w-[420px] justify-between font-['Open_Sans',sans-serif] text-[13px] leading-[18px] text-[#666]">
        <span>21:00</span>
        <span>09:00</span>
      </div>
      <div className="mt-3.5 flex h-10 items-center gap-1">
        {orderButtons.map((b) => (
          <button
            key={b.label}
            className={`h-[39px] w-[84px] rounded-xs border border-[#7f9fc4] bg-[#d6e3f2] text-[20px] font-semibold leading-none ${b.className}`}
          >
            {b.label}
          </button>
        ))}
        <label htmlFor="lots" className="ml-0.5">手数</label>
        <div className="ml-1 flex h-[26px] w-20 border border-[#7a7a7a] bg-white p-px">
          <input id="lots" type="text" defaultValue="1" className="min-w-0 flex-1 pr-1 text-right font-['Liberation_Sans',sans-serif] text-[15px]" />
          <div className="flex w-5 flex-col">
            <button aria-label="增加" className="flex flex-1 items-center justify-center border border-[#bbb] bg-[#f0f0f0]">
              <svg viewBox="0 0 8 5" className="h-[5px] w-2"><path d="M0 5l4-5 4 5z" /></svg>
            </button>
            <button aria-label="减少" className="flex flex-1 items-center justify-center border border-[#bbb] bg-[#f0f0f0]">
              <svg viewBox="0 0 8 5" className="h-[5px] w-2"><path d="M0 0l4 5 4-5z" /></svg>
            </button>
          </div>
        </div>
      </div>
      <div className="mt-2.5 h-[215px] border border-[#828790] bg-white">
        <table className="w-full table-fixed text-left">
          <thead>
            <tr className="h-[25px]">
              <th className="w-[137px] border-r border-[#e4e4e4] pl-[7px] font-normal">时间</th>
              <th className="w-[77px] border-r border-[#e4e4e4] pl-[7px] font-normal">合约</th>
              <th className="w-[50px] border-r border-[#e4e4e4] pl-[7px] font-normal">买卖</th>
              <th className="w-[50px] border-r border-[#e4e4e4] pl-[7px] font-normal">平开</th>
              <th className="w-[68px] border-r border-[#e4e4e4] pl-[7px] font-normal">成交价</th>
              <th className="w-[81px] border-r border-[#e4e4e4] pl-[7px] font-normal">持仓量</th>
              <th className="w-[81px] border-r border-[#e4e4e4] pl-[7px] font-normal">平仓盈亏</th>
              <th />
            </tr>
          </thead>
        </table>
      </div>
      <div className="mt-[9px] flex h-[23px] gap-3">
        <span className="mr-auto pt-px">浮动盈亏</span>
        <button className="w-[98px] border border-[#adadad] bg-[#e1e1e1]">交易参数</button>
        <button className="w-[98px] border border-[#adadad] bg-[#e1e1e1]">分析报告</button>
      </div>
    </div>
  </section>
);

const StatusBar: FC = () => (
  <div className="flex h-[29px] shrink-0 items-center border-t-2 border-[#f8f8f8] bg-[#e6e5e5] pb-[5px] pr-[31px]">
    <a href="#" className="ml-[1190px] mr-auto whitespace-nowrap text-[15px] leading-none text-[#000a9c]">
      投教小科普：高清屏如何放大显示字体
    </a>
    <button className="mr-[3px] h-[22px] w-[60px] border border-[#8c1420] bg-[#cf2233] text-[15px] font-light leading-none text-white">期货户</button>
    <button className="mr-[13px] h-[22px] w-[60px] border border-[#505050] bg-[#757575] text-[15px] font-light leading-none text-white">外盘户</button>
    <i className="mr-4 h-[18px] w-px bg-[#e0b8b0]" />
    <svg viewBox="0 0 21 18" className="mr-[9px] h-[18px] w-[21px]">
      <rect width="21" height="18" fill="#107a18" />
      <path d="M0 3.500h21M0 7.500h21M0 11.500h21M3.500 0v14M7.500 0v14M11.500 0v14M15.500 0v14" stroke="#084a0c" />
      <path d="M0 14h21v4H0z" fill="#10f020" />
    </svg>
    <svg viewBox="0 0 20 18" className="mr-[9px] h-[18px] w-5" fill="#2c9c38">
      <path d="M0 15h4v3H0zM6 11h3v7H6zM11 6h4v12h-4zM16 0h4v18h-4z" />
    </svg>
    <span className="pt-0.5 font-['Liberation_Sans',sans-serif] text-[14px] text-black">23:27:03-DCE</span>
  </div>
);

const Taskbar: FC = () => (
  <footer className="flex h-[49px] shrink-0 bg-[linear-gradient(to_right,#484848_0%,#454545_36%,#343c40_48%,#25303a_72%,#2c2d2f_76%,#1c2931_84%,#1c2931_100%)] text-[15px] text-[#f0f0f0]">
    <button aria-label="开始" className="flex w-[60px] items-center justify-center">
      <svg viewBox="0 0 20 20" className="h-5 w-5" fill="#fff">
        <path d="M0 3l8.500-1.200v7.700H0zM9.500 1.600L20 0v9.500H9.500zM0 10.500h8.500v7.700L0 17zM9.500 10.500H20V20L9.500 18.400z" />
      </svg>
    </button>
    <button className="ml-[9px] flex w-[190px] items-center gap-1 border-b-2 border-[#76b9ed] pl-2 pt-0.5">
      <WeChat className="h-[26px] w-[30px]" />
      微信
    </button>
    <button className="ml-[11px] flex w-[190px] items-center gap-1 border-b-2 border-[#76b9ed] pl-2 pt-0.5">
      <svg viewBox="0 0 30 30" className="h-[30px] w-[30px] shrink-0">
        <path d="M15 15A8 8 0 0 1 2.400 7.800A14.500 14.500 0 0 1 15 .5A8 8 0 0 0 15 15Z" fill="#6a7cf4" />
        <path d="M15 15A8 8 0 0 1 15 .5A14.500 14.500 0 0 1 27.600 7.800A8 8 0 0 0 15 15Z" fill="#c250ee" />
        <path d="M15 15A8 8 0 0 1 27.600 7.800A14.500 14.500 0 0 1 27.600 22.200A8 8 0 0 0 15 15Z" fill="#f4443c" />
        <path d="M15 15A8 8 0 0 1 27.600 22.200A14.500 14.500 0 0 1 15 29.500A8 8 0 0 0 15 15Z" fill="#ffc81c" />
        <path d="M15 15A8 8 0 0 1 15 29.500A14.500 14.500 0 0 1 2.400 22.200A8 8 0 0 0 15 15Z" fill="#5ad040" />
        <path d="M15 15A8 8 0 0 1 2.400 22.200A14.500 14.500 0 0 1 2.400 7.800A8 8 0 0 0 15 15Z" fill="#30b4e8" />
        <circle cx="15" cy="15" r="2.500" fill="#fff" />
      </svg>
      <span className="whitespace-nowrap">期忆论坛 - 一个选...</span>
    </button>
    <button aria-label="行情软件" className="ml-[21px] flex items-center">
      <svg viewBox="0 0 30 30" className="h-[30px] w-[30px]">
        <rect width="30" height="30" fill="#e8e6e6" />
        <path d="M14 4C7 6 3 11 3.200 17 3.500 23 8 27.500 15 27.500c5.500 0 9.800-4 10.800-9-1.500 3.500-5 6-9.300 6C10 24.500 7 20.500 7.500 15 8 11 10 7 14 4z" fill="#c8141e" />
        <path d="M9 13l4-4v14c-3-1-4.500-3-4.500-6zM14.500 8l4.500-4v20h-4.500zM20.500 8l1.500-1v16l-1.500.7zM23.500 7l1.500-1v14l-1.500 2z" fill="#d02028" />
      </svg>
    </button>
    <button aria-label="K" className="ml-8 flex items-center">
      <KIcon className="h-[30px] w-[30px]" />
    </button>
    <button aria-label="趋势" className="ml-8 flex items-center">
      <svg viewBox="0 0 30 30" className="h-[30px] w-[30px]">
        <path d="M0 27L6 16l6 2 6-9-4-1L30 1l-4 14-4-3-8 11-5-3z" fill="#d81c28" stroke="#7c0c14" strokeWidth=".8" />
      </svg>
    </button>
    <button className="ml-[17px] flex w-[200px] items-center gap-1 border-b-2 border-[#76b9ed] bg-[#66696b] pl-[13px] pt-0.5">
      <WhLogo className="h-[30px] w-[30px]" />
      赢顺云端交易 &nbsp;-&nbsp; V...
    </button>
    <div className="ml-auto flex items-center gap-2.5">
      <KIcon className="h-5 w-5" />
      <WeChat className="h-5 w-5" />
      <svg viewBox="0 0 20 20" className="h-5 w-5">
        <circle cx="10" cy="10" r="10" fill="#f8c820" />
        <path d="M1 5a10 10 0 0 1 16-2C12 1 6 2 1 5zM19 15a10 10 0 0 1-16 2c5 2 11 1 16-2z" fill="#2fae4c" />
        <path d="M10 6v8M6 10h8" stroke="#2a8a3a" strokeWidth="2.500" />
      </svg>
      <svg viewBox="0 0 20 20" className="h-5 w-5" fill="none" stroke="#fff" strokeWidth="1.200">
        <path d="M5 5.500h13.500v9H5zM19.500 8.500v3M.5 4v3h4V4M1.500 2v2M3.500 2v2M2.500 7v3.500l2 1.500" />
        <path d="M6.500 7h10.500v6h-10.500z" fill="#fff" />
      </svg>
      <svg viewBox="0 0 20 20" className="h-5 w-5" fill="none" stroke="#fff" strokeWidth="1.200">
        <path d="M6 3h13v11H4V8M11 14v3M7 17.500h8M1 2.500h4v4H1zM3 6.500V8" />
      </svg>
      <svg viewBox="0 0 20 20" className="h-5 w-5" fill="none" stroke="#fff" strokeWidth="1.200">
        <path d="M1 7.500h3l4-4v13l-4-4H1zM11 7.500c1 1.500 1 3.500 0 5M13.500 5.500c2 2.500 2 6.500 0 9" />
        <path d="M16 3.500c3.500 4 3.500 9 0 13" stroke="#888" />
      </svg>
      <span className="w-[22px] text-center text-[16px]">中</span>
      <svg viewBox="0 0 20 20" className="ml-[3px] h-5 w-5">
        <path d="M1 3L17 0l3 16-16 4z" fill="#e8532a" />
        <path d="M14.500 5.500c-3-1.500-8-1-8 1.800s8 2 7.500 4.700c-.4 2.500-5 2.800-8.500 1.200" fill="none" stroke="#fff" strokeWidth="2.600" />
      </svg>
      <div className="ml-2.5 mr-1.5 w-20 text-center font-['Open_Sans',sans-serif] text-[15px] leading-[23px]">
        <p>23:27</p>
        <p>2020/7/6</p>
      </div>
    </div>
    <i className="mr-1 w-px bg-[#4c575e]" />
  </footer>
);

const App: FC = () => (
  <div className="relative flex h-screen w-full flex-col overflow-hidden bg-black font-['Noto_Sans_CJK_SC',sans-serif]">
    <TitleBar />
    <Toolbar />
    <ShotBar />
    <main className="relative flex min-h-0 flex-1 flex-col overflow-hidden border-t-2 border-[#555]">
      <div className="flex min-h-0 flex-1">
        <SideTabs />
        <ChartPane />
        <QuotePanel />
      </div>
      <div className="flex h-[31px] shrink-0 justify-end bg-[#4d4d4d]">
        <a
          href="#"
          className="mt-0.5 flex w-[121px] items-center justify-end gap-1 bg-[linear-gradient(to_right,#3b607c_0,#2f6f9f_30px)] pr-3.5 text-[14px] font-medium leading-none text-white [clip-path:polygon(28px_0,100%_0,100%_100%,4px_100%)]"
        >
          <svg viewBox="0 0 14 14" className="h-3.5 w-3.5">
            <path d="M0 0h14v10h-3v4l-4-4H0z" fill="#fff" />
            <path d="M3 3.500h8M3 6.500h8" stroke="#2f6f9f" />
          </svg>
          论坛提问
        </a>
      </div>
      <StatusBar />
      <TradeWindow />
      <ReplayDialog />
    </main>
    <Taskbar />
  </div>
);

export default App;
